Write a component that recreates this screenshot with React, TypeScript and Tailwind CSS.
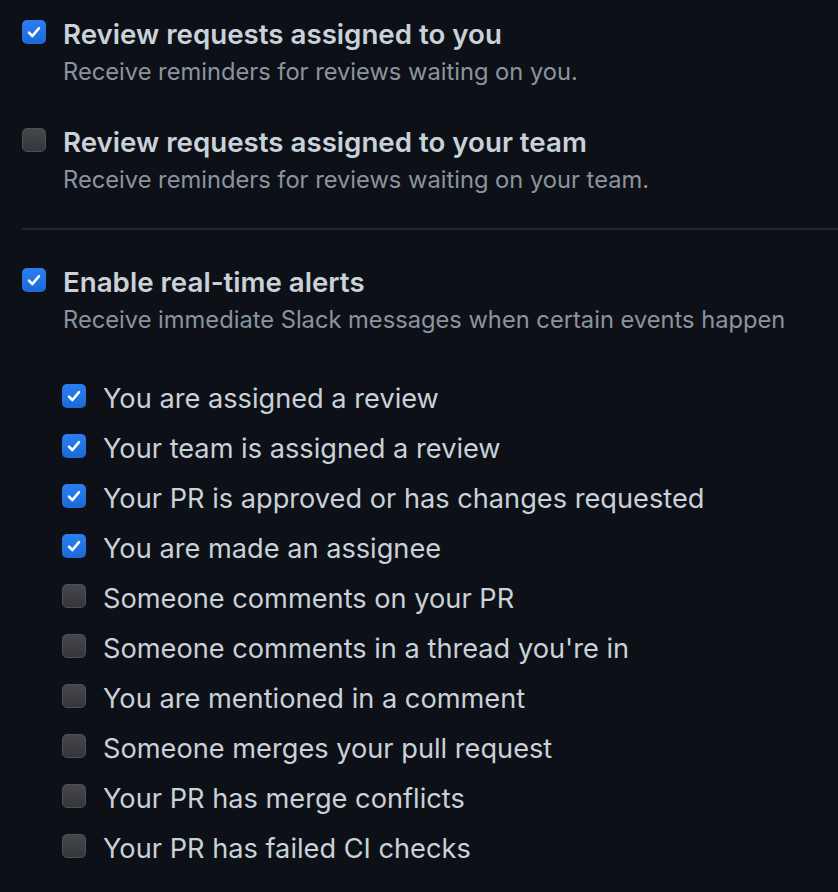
import React from "react";

const Box = ({ checked }: { checked: boolean }) =>
  checked ? (
    <div className="w-6 h-6 shrink-0 rounded-[5px] bg-gradient-to-b from-[#2b7ff2] to-[#1b69d6] flex items-center justify-center">
      <svg width="16" height="16" viewBox="0 0 16 16" fill="none">
        <path
          d="M3 8.6 L6.4 12 L13 4.2"
          stroke="white"
          strokeWidth="2.6"
          strokeLinecap="round"
          strokeLinejoin="round"
        />
      </svg>
    </div>
  ) : (
    <div className="w-6 h-6 shrink-0 rounded-[5px] bg-gradient-to-b from-[#45474c] to-[#34363a] border border-[#4d5056]" />
  );

const Option = ({
  checked,
  title,
  desc,
}: {
  checked: boolean;
  title: string;
  desc: string;
}) => (
  <div className="flex gap-[18px]">
    <div className="pt-[6px]">
      <Box checked={checked} />
    </div>
    <div className="-ml-px">
      <div className="text-[27.7px] leading-[40px] font-semibold text-[#c9d1d9]">{title}</div>
      <div className="text-[23.7px] leading-[36px] text-[#8b949e]">{desc}</div>
    </div>
  </div>
);

const alerts: [boolean, string][] = [
  [true, "You are assigned a review"],
  [true, "Your team is assigned a review"],
  [true, "Your PR is approved or has changes requested"],
  [true, "You are made an assignee"],
  [false, "Someone comments on your PR"],
  [false, "Someone comments in a thread you're in"],
  [false, "You are mentioned in a comment"],
  [false, "Someone merges your pull request"],
  [false, "Your PR has merge conflicts"],
  [false, "Your PR has failed CI checks"],
];

export default function App() {
  return (
    <div
      className="min-h-screen w-full bg-[#0d1117] pl-[22px] pt-[14px] pb-5"
      style={{ fontFamily: "Inter, 'Noto Sans', sans-serif" }}
    >
      <Option
        checked
        title="Review requests assigned to you"
        desc="Receive reminders for reviews waiting on you."
      />
      <div className="mt-8">
        <Option
          checked={false}
          title="Review requests assigned to your team"
          desc="Receive reminders for reviews waiting on your team."
        />
      </div>
      <div className="mt-[30px] h-[2px] bg-[#21262d]" />
      <div className="mt-8">
        <Option
          checked
          title="Enable real-time alerts"
          desc="Receive immediate Slack messages when certain events happen"
        />
      </div>
      <div className="mt-[36px] pl-10 flex flex-col">
        {alerts.map(([c, label]) => (
          <div key={label} className="h-[50px] flex items-center gap-[17px]">
            <div className="-mt-[6px]">
              <Box checked={c} />
            </div>
            <span className="text-[27.2px] text-[#c9d1d9]">{label}</span>
          </div>
        ))}
      </div>
    </div>
  );
}
